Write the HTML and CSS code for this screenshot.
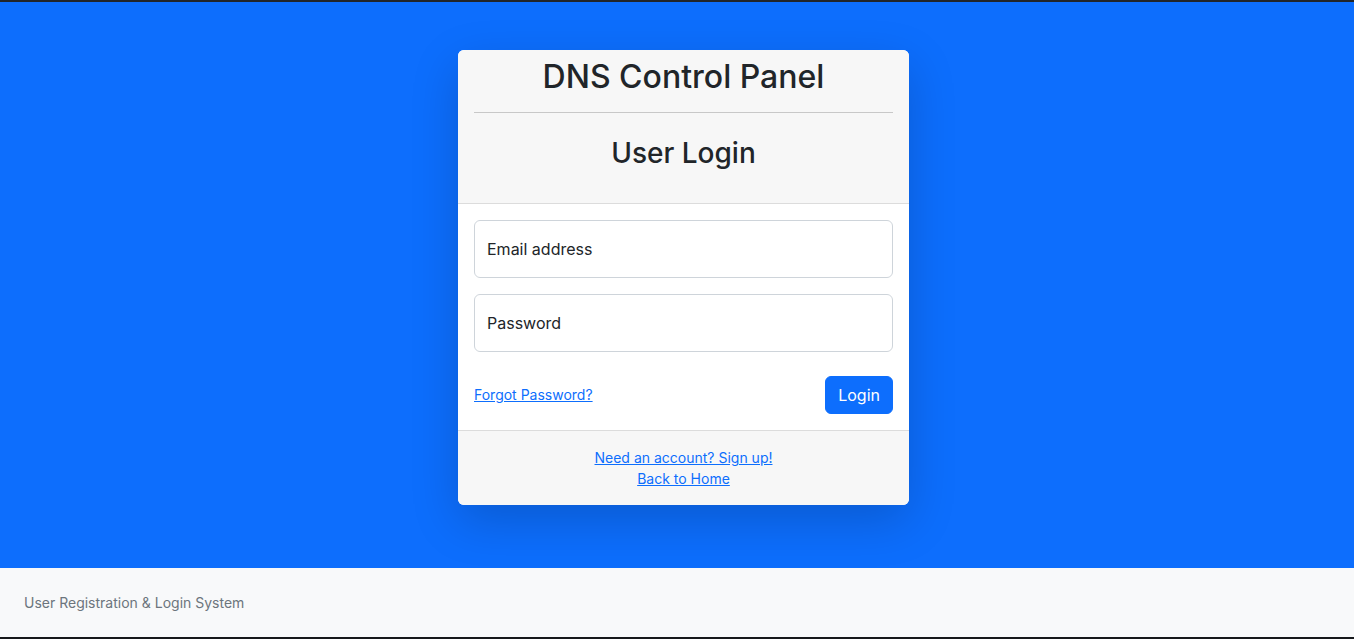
FILE: index.html
```html
<!DOCTYPE html>
<html lang="en">
<head>
<meta charset="utf-8">
<title>User Login</title>
<link rel="stylesheet" href="styles.css">
</head>
<body>
<div class="layout">
  <main class="main">
    <div class="wrap">
      <div class="card">
        <div class="card-header">
          <h2 class="title">DNS Control Panel</h2>
          <hr class="divider">
          <h3 class="subtitle">User Login</h3>
        </div>
        <div class="card-body">
          <form class="form">
            <div class="floating">
              <label class="floating-label">Email address</label>
            </div>
            <div class="floating">
              <label class="floating-label">Password</label>
            </div>
            <div class="actions">
              <a class="link" href="#">Forgot Password?</a>
              <button type="button" class="btn">Login</button>
            </div>
          </form>
        </div>
        <div class="card-footer">
          <div><a class="link" href="#">Need an account? Sign up!</a></div>
          <div><a class="link" href="#">Back to Home</a></div>
        </div>
      </div>
    </div>
  </main>
  <footer class="footer">
    <div class="footer-text">User Registration &amp; Login System</div>
  </footer>
</div>
</body>
</html>
```

FILE: styles.css
```css
* { box-sizing: border-box; }
html, body { margin: 0; padding: 0; }
body {
  background: #0d6efd;
  font-family: Inter, "Noto Sans", sans-serif;
  color: #212529;
  font-size: 16px;
  line-height: 1.5;
  border-top: 2px solid #212529;
  border-bottom: 2px solid #16181b;
  height: 639px;
}
.layout {
  display: flex;
  flex-direction: column;
  height: 635px;
}
.main {
  flex: 1;
  background: #0d6efd;
}
.wrap {
  display: flex;
  justify-content: center;
  padding-top: 48px;
  padding-left: 13px;
}
.card {
  width: 451px;
  background: #fff;
  border-radius: 6px;
  box-shadow: 0 16px 48px rgba(0,0,0,.175);
  overflow: hidden;
}
.card-header {
  background: #f7f7f7;
  padding: 8px 16px;
  border-bottom: 1px solid #dcdcdc;
  text-align: center;
}
.title {
  margin: 0 0 16px;
  font-size: 32px;
  font-weight: 500;
  line-height: 1.2;
}
.divider {
  margin: 0;
  border: 0;
  border-top: 1px solid #c8c8c8;
  height: 0;
}
.subtitle {
  margin: 24px 0;
  font-size: 28px;
  font-weight: 500;
  line-height: 1.2;
}
.card-body {
  padding: 16px;
}
.form {
  display: flex;
  flex-direction: column;
  gap: 16px;
}
.floating {
  height: 58px;
  border: 1px solid #ced4da;
  border-radius: 6px;
  background: #fff;
  padding: 16px 12px;
}
.floating-label {
  display: block;
  line-height: 24px;
  color: #212529;
}
.actions {
  margin-top: 8px;
  display: flex;
  justify-content: space-between;
  align-items: center;
}
.link {
  color: #0d6efd;
  font-size: 14px;
  text-decoration: underline;
}
.btn {
  background: #0d6efd;
  color: #fff;
  border: 1px solid #0d6efd;
  border-radius: 6px;
  font-family: inherit;
  font-size: 16px;
  line-height: 24px;
  padding: 6px 12px;
}
.card-footer {
  background: #f7f7f7;
  border-top: 1px solid #dcdcdc;
  padding: 16px;
  text-align: center;
  font-size: 14px;
  line-height: 21px;
}
.footer {
  background: #f8f9fa;
  padding: 24px;
}
.footer-text {
  font-size: 14px;
  line-height: 21px;
  color: #6c757d;
}
```
